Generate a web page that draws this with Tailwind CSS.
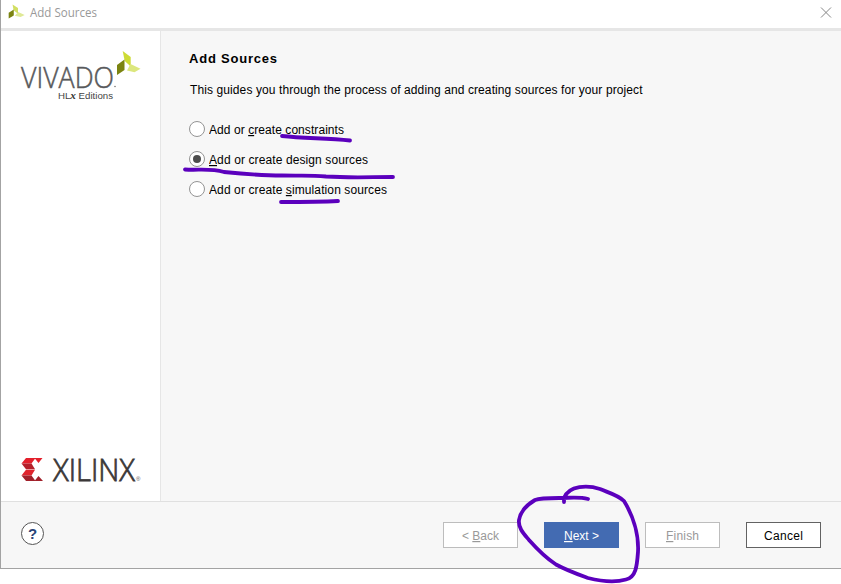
<!DOCTYPE html>
<html lang="en">
<head>
<meta charset="utf-8">
<title>Add Sources</title>
<script src="https://cdn.jsdelivr.net/npm/@tailwindcss/browser@4"></script>
</head>
<body class="relative h-[584px] w-[841px] overflow-hidden bg-white font-['Liberation_Sans',sans-serif] text-[12px] text-black">
<div class="flex h-[569px] w-[841px] flex-col border-b border-l border-[#a3a3a3] bg-[#f7f7f7]">
  <header class="flex h-[31px] shrink-0 items-start border-b-[3px] border-[#e6e6e6] bg-white pl-[7px]">
    <svg class="mt-[4px] h-[15px] w-[17px] shrink-0" viewBox="116 50 25 26" preserveAspectRatio="none">
      <path fill="#d2df62" d="M122.700 51l8 6v10l-6.500-6z"/><path fill="#7b8411" d="M117 65l7.500-5.500v10.500l-7.500 5z"/><path fill="#dfe996" d="M126 70.500l5-6.500 9.500 5-6 3.500z"/>
    </svg>
    <svg class="mt-[3px] ml-[4px] h-[20px] w-[80px]"><text x="1" y="14" textLength="67" lengthAdjust="spacingAndGlyphs" class="fill-[#999] font-['Open_Sans',sans-serif] text-[12px]">Add Sources</text></svg>
    <svg class="mt-[7px] mr-[9px] ml-auto size-[12px]" viewBox="0 0 12 12"><path d="M1 .5l10 10M11 .5l-10 10" stroke="#858585" fill="none"/></svg>
  </header>
  <div class="flex h-[470px] shrink-0">
    <aside class="flex w-[160px] shrink-0 flex-col justify-between border-r border-[#e6e6e6] bg-white">
      <svg class="h-[80px] w-[159px]" viewBox="1 31 159 80">
        <text x="21" y="87.500" textLength="93" lengthAdjust="spacingAndGlyphs" class="fill-[#58595b] stroke-[#58595b] stroke-[0.5] font-['Open_Sans',sans-serif] text-[30px] font-light">VIVADO</text>
        <circle cx="115" cy="86.500" r=".8" fill="#777"/>
        <text x="58" y="99" class="fill-[#444] text-[9.500px]" textLength="55" lengthAdjust="spacingAndGlyphs">HL<tspan class="fill-[#333] font-['Liberation_Serif',serif] text-[11px] font-bold italic">x</tspan> Editions</text>
        <path fill="#cddb35" d="M122.700 51l8 6v9.500l-6-5.500z"/><path fill="#7b8411" d="M117 65l7.500-5.500v10.500l-7.500 5z"/><path fill="#dce77e" d="M127 70.500l3.500-6.500 10 4.800-6 3.500z"/>
      </svg>
      <svg class="h-[56px] w-[159px]" viewBox="1 445 159 56">
        <path fill="#e3202c" d="M26 458h9.500l-4 5.500h-10zM34.500 458h8l-4 5z"/>
        <path fill="#b51f2a" d="M21.500 463.500h10l3.500 5.700h-9z"/>
        <path fill="#df242d" d="M26 469.700h9l-3.500 5.800h-10z"/>
        <path fill="#a1202a" d="M21.500 475.500h10l4 5.500H26zM38.500 476l4.500 5h-8.500z"/>
        <text x="53" y="481" textLength="82" lengthAdjust="spacingAndGlyphs" class="fill-[#3b3838] stroke-[#3b3838] stroke-[0.8] font-['Open_Sans',sans-serif] text-[32px] font-light">XILINX</text>
        <text x="136" y="481" class="fill-[#555] text-[6px]">®</text>
      </svg>
    </aside>
    <main class="flex-1 pl-[28px]">
      <h1 class="mt-[17px] h-[20px] text-[13px] leading-[20px] font-bold"><svg class="h-[20px] w-[100px]"><text x="0" y="15" textLength="88">Add Sources</text></svg></h1>
      <p class="mt-[12px] h-[20px]"><svg class="h-[20px] w-[480px]"><text x="1" y="14" textLength="452.500">This guides you through the process of adding and creating sources for your project</text></svg></p>
      <div class="mt-[14px] flex flex-col">
        <label class="flex h-[30px] items-center gap-[4px]"><span class="size-[16px] rounded-full border border-[#949494] bg-white"></span><svg class="h-[20px] w-[200px]"><text x="0" y="15" textLength="135">Add or <tspan class="underline underline-offset-2">c</tspan>reate constraints</text></svg></label>
        <label class="flex h-[30px] items-center gap-[4px]"><span class="flex size-[16px] items-center justify-center rounded-full border border-[#949494] bg-white"><span class="size-[8px] rounded-full bg-[#4d4d4d]"></span></span><svg class="h-[20px] w-[200px]"><text x="0" y="15" textLength="159"><tspan class="underline underline-offset-2">A</tspan>dd or create design sources</text></svg></label>
        <label class="flex h-[30px] items-center gap-[4px]"><span class="size-[16px] rounded-full border border-[#949494] bg-white"></span><svg class="h-[20px] w-[200px]"><text x="0" y="15" textLength="178">Add or create <tspan class="underline underline-offset-2">s</tspan>imulation sources</text></svg></label>
      </div>
    </main>
  </div>
  <footer class="flex flex-1 items-center border-t border-[#e0e0e0] pr-[20px] pl-[20px]">
    <button class="mb-[3px] flex size-[23px] items-center justify-center rounded-full border border-[#555] bg-white text-[15px] leading-none font-bold text-[#294477]">?</button>
    <div class="ml-auto flex gap-[26px]">
      <button class="h-[26px] w-[75px] border border-[#bdbdbd] bg-white text-[#999]"><svg class="h-[24px] w-[73px]"><text x="18" y="17" textLength="37" fill="currentColor">&lt; <tspan class="underline underline-offset-2">B</tspan>ack</text></svg></button>
      <button class="h-[26px] w-[75px] border border-[#436bb2] bg-[#436bb2] text-white"><svg class="h-[24px] w-[73px]"><text x="19" y="17" textLength="35" fill="currentColor"><tspan class="underline underline-offset-2">N</tspan>ext &gt;</text></svg></button>
      <button class="h-[26px] w-[75px] border border-[#bdbdbd] bg-white text-[#999]"><svg class="h-[24px] w-[73px]"><text x="20" y="17" textLength="33" fill="currentColor"><tspan class="underline underline-offset-2">F</tspan>inish</text></svg></button>
      <button class="h-[26px] w-[75px] border border-[#626262] bg-white text-black"><svg class="h-[24px] w-[73px]"><text x="17" y="17" textLength="39" fill="currentColor">Cancel</text></svg></button>
    </div>
  </footer>
</div>
<svg class="pointer-events-none absolute inset-0" width="841" height="584" viewBox="0 0 841 584" fill="none" stroke="#5b00bd" stroke-width="3.800" stroke-linecap="round" stroke-linejoin="round">
  <path d="M282 136C304 138.500 326 138 350 140.500"/>
  <path d="M185 169.500C198 170.500 210 168 224 172C244 174 263 175.500 282 175.500C300 176 309 175 326 176.500C350 178 370 177 393 177"/>
  <path d="M281 202C299 202 320 202 338 201"/>
  <path d="M588 499C579 496.500 570 498 559 498C548 498 540 498 535 500C525 506 520 514 519 520C518 528 524 534 529 540C537 549 546 558 556 564.500C567 570.500 577 574 588 578C600 581 614 583 626 579.500C636 577 637 566 638 552C639 533 632 514 624 501C618 495 608 492.500 600 489C588 485 569 485 564 498V502"/>
</svg>
</body>
</html>
